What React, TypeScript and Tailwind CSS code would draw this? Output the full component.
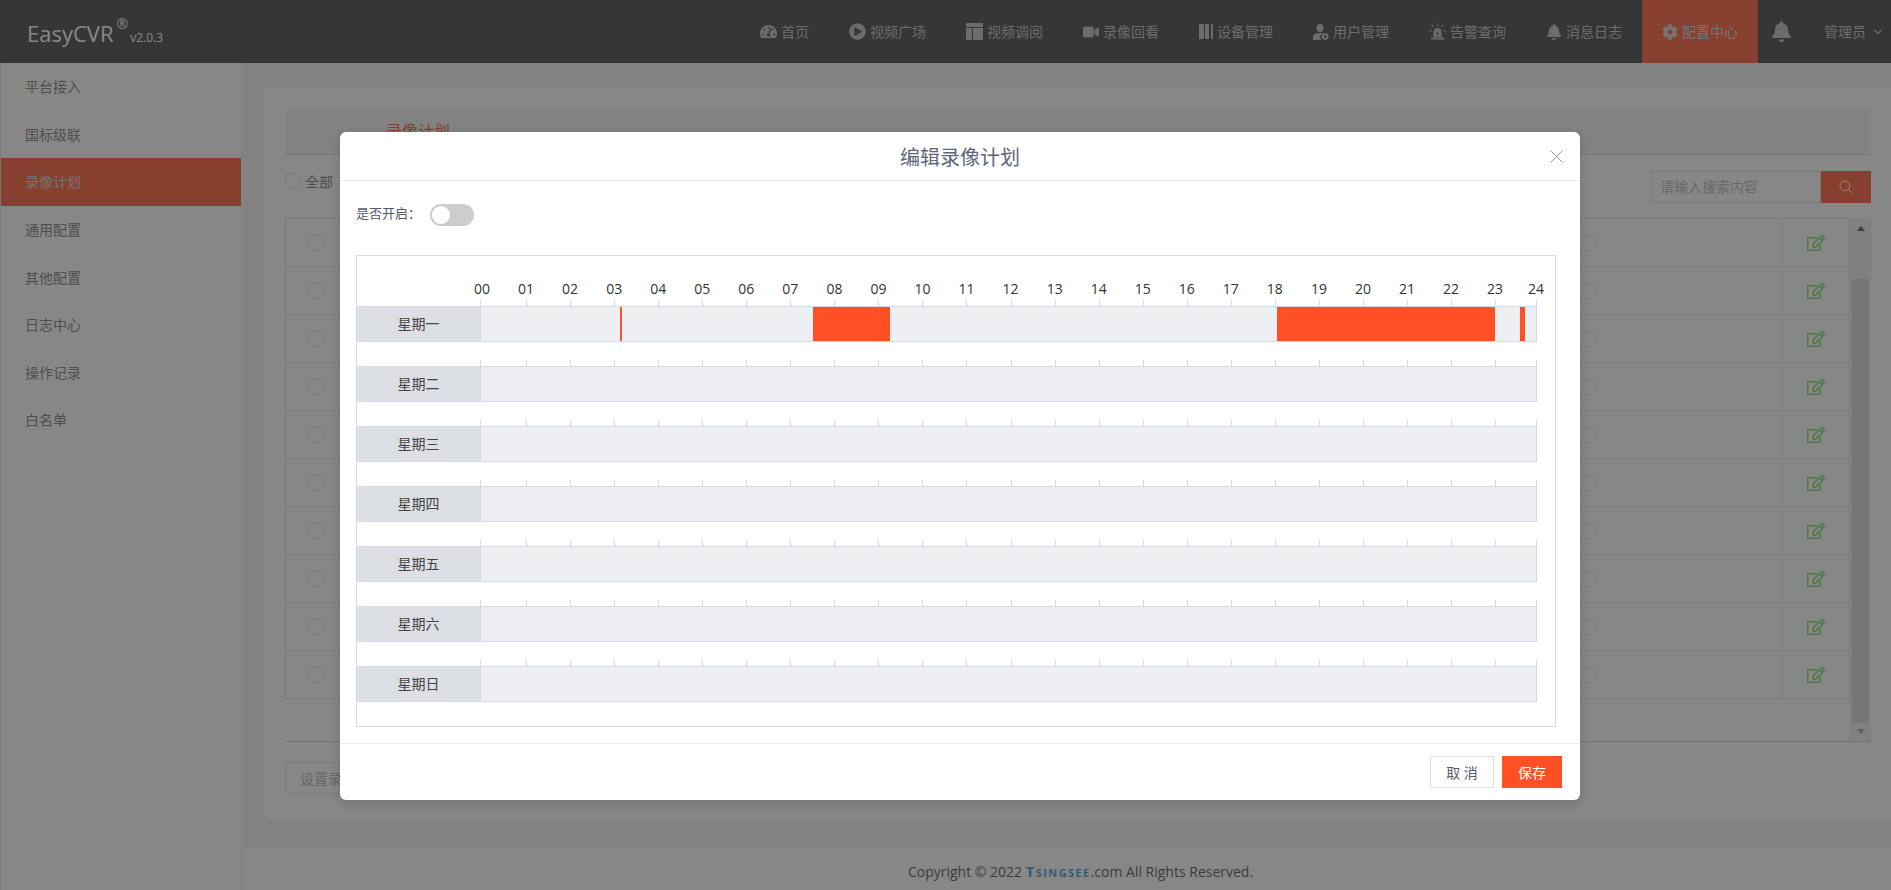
import { FC } from "react";
import { FaTachometerAlt, FaPlayCircle, FaVideo, FaBell, FaCog, FaRegEdit } from "react-icons/fa";
import { IoSearchOutline } from "react-icons/io5";

const LayoutIcon = () => (
  <svg width="17" height="17" viewBox="0 0 17 17" fill="currentColor">
    <rect x="0" y="0" width="17" height="4" />
    <rect x="0" y="5" width="6" height="12" />
    <rect x="7" y="5" width="10" height="12" />
  </svg>
);

const BooksIcon = () => (
  <svg width="14" height="15" viewBox="0 0 14 15" fill="currentColor">
    <rect x="0" y="0" width="5" height="15" rx="0.5" />
    <rect x="6" y="0" width="4" height="15" rx="0.5" />
    <rect x="12" y="0" width="2" height="15" />
  </svg>
);

const UserLockIcon = () => (
  <svg width="16" height="16" viewBox="0 0 16 16" fill="currentColor">
    <ellipse cx="7" cy="4" rx="3.6" ry="4" />
    <path d="M0 16v-2.5C0 10.6 2.5 9 5 9h4c.6 0 1.2.1 1.7.3A4 4 0 0 0 8.2 16z" />
    <path
      fillRule="evenodd"
      d="M12.2 9.2a3.4 3.4 0 1 0 0 6.8 3.4 3.4 0 0 0 0-6.8zm0 2.1a1.3 1.3 0 1 1 0 2.6 1.3 1.3 0 0 1 0-2.6z"
    />
  </svg>
);

const SirenIcon = () => (
  <svg width="17" height="17" viewBox="0 0 17 17" fill="currentColor">
    <path d="M4.5 14V9a4 4 0 0 1 8 0v5z" />
    <rect x="2" y="14.5" width="13" height="2" />
    <path d="M8 0h1v3H8zM2.2 2.2l.8-.7 2 2.2-.8.7zM14.8 2.2l-.8-.7-2 2.2.8.7zM0 7.5h2.6v1H0zM14.4 7.5H17v1h-2.6z" />
    <path d="M9 8L7 11.2h1.3L8 13.5l2-3.2H8.7z" fill="#343539" />
  </svg>
);

const navItems = [
  { label: "首页", icon: <FaTachometerAlt size={17} /> },
  { label: "视频广场", icon: <FaPlayCircle size={17} /> },
  { label: "视频调阅", icon: <LayoutIcon /> },
  { label: "录像回看", icon: <FaVideo size={16} /> },
  { label: "设备管理", icon: <BooksIcon /> },
  { label: "用户管理", icon: <UserLockIcon /> },
  { label: "告警查询", icon: <SirenIcon /> },
  { label: "消息日志", icon: <FaBell size={16} /> },
];

const sideItems = ["平台接入", "国标级联", "录像计划", "通用配置", "其他配置", "日志中心", "操作记录", "白名单"];
const days = ["星期一", "星期二", "星期三", "星期四", "星期五", "星期六", "星期日"];
const hours = Array.from({ length: 25 }, (_, i) => String(i).padStart(2, "0"));

// px offsets inside the monday track
const segments = [
  { left: 139, width: 2 },
  { left: 332, width: 77 },
  { left: 796, width: 218 },
  { left: 1039, width: 5 },
];

const Header: FC = () => (
  <header className="h-[63px] shrink-0 bg-[#343539] flex items-center text-[#bcbcbc]">
    <div className="pl-[27px] flex items-start text-white mt-[2px]">
      <span className="text-[22px] leading-[30px]">EasyCVR</span>
      <span className="text-[14px] leading-[14px] ml-[3px] -mt-[1px]">®</span>
      <span className="text-[12px] leading-[16px] mt-[12px] ml-[2px]">v2.0.3</span>
    </div>
    <nav className="ml-auto flex h-full text-[14px]">
      {navItems.map((item) => (
        <div key={item.label} className="flex items-center gap-1 px-5">
          {item.icon}
          <span>{item.label}</span>
        </div>
      ))}
      <div className="flex items-center gap-1 w-[116px] justify-center bg-[#ff4f24] text-[#d0d0d0]">
        <FaCog size={16} />
        <span>配置中心</span>
      </div>
    </nav>
    <div className="w-[66px] flex justify-center pr-[21px] pl-[2px]">
      <FaBell size={21} />
    </div>
    <div className="flex items-center text-[14px] w-[67px]">
      <span>管理员</span>
      <svg className="ml-2 shrink-0" width="8" height="6" viewBox="0 0 8 6" fill="none" stroke="currentColor" strokeWidth="1.2">
        <path d="M0.5 1L4 4.5L7.5 1" />
      </svg>
    </div>
  </header>
);

const Sidebar: FC = () => (
  <aside className="w-[241px] shrink-0 bg-white border-l border-[#dcdcdc] text-[14px] text-[#707070]">
    {sideItems.map((item) => (
      <div
        key={item}
        className={`h-[47.6px] flex items-center pl-6 ${item === "录像计划" ? "bg-[#ff4f24] text-[#d0d0d0]" : ""}`}
      >
        {item}
      </div>
    ))}
  </aside>
);

const Background: FC = () => (
  <main className="flex-1 bg-[#f2f2f2] flex flex-col min-w-0">
    <div className="flex-1 pl-6 pt-[25px] pb-[29px]">
      <div className="bg-white h-full px-5 pt-5">
        <div className="h-[47px] bg-[#f2f2f2] border-b border-[#d8d8d8] flex items-center pl-[101px] text-[16px] text-[#ff4f24]">
          录像计划
        </div>
        <div className="h-[63px] flex items-center text-[14px] text-[#707070]">
          <div className="flex items-center mb-[11px]">
            <span className="w-4 h-4 border border-[#dcdee2] rounded-sm mr-1" />
            全部
          </div>
          <div className="ml-auto flex">
            <div className="w-[170px] h-8 border border-[#dcdee2] flex items-center pl-2 text-[14px] text-[#b0b0b0]">
              请输入搜索内容
            </div>
            <div className="w-[50px] h-8 bg-[#ff4f24] flex items-center justify-center text-white">
              <IoSearchOutline size={16} />
            </div>
          </div>
        </div>
        <div className="h-[524px] flex border-b border-[#c8c8c8]">
          <div className="w-[1565px]">
            <div className="border border-[#d8d8d8] border-b-0">
              {Array.from({ length: 10 }).map((_, i) => (
                <div key={i} className="h-[48px] border-b border-[#e4e4e4] flex items-center">
                  <div className="w-[47px] pl-[22px]">
                    <span className="block w-4 h-4 border border-[#dcdee2] rounded-sm" />
                  </div>
                  <span className="ml-[1240px] w-[24px] h-4 border border-[#dcdee2] rounded-sm" />
                  <div className="ml-auto w-[67px] h-full border-l border-[#e8e8e8] flex items-center justify-center text-[#6ed84a]">
                    <FaRegEdit size={18} />
                  </div>
                </div>
              ))}
            </div>
          </div>
          <div className="flex-1 bg-[#f1f1f1] flex flex-col items-center pt-[8px] pb-[7px]">
            <div className="w-0 h-0 border-x-[4px] border-x-transparent border-b-[5px] border-b-[#505050]" />
            <div className="w-[17px] h-[444px] bg-[#d2d2d2] mt-[48px]" />
            <div className="w-0 h-0 border-x-[4px] border-x-transparent border-t-[5px] border-t-[#a0a0a0] mt-[6px]" />
          </div>
        </div>
        <div className="mt-[20px] w-[120px] h-8 border border-[#dcdee2] flex items-center pl-[14px] text-[14px] text-[#aaa]">
          设置录像计划
        </div>
      </div>
    </div>
    <footer className="h-[42px] shrink-0 bg-white border-l border-[#e8e8e8] flex items-center justify-center text-[14px] text-[#444] pl-[28px] pt-[5px]">
      <span>Copyright © 2022&nbsp;</span>
      <span className="font-bold text-[#2f8fd0] tracking-[1.4px] text-[11px]">
        <span className="text-[15px]">T</span>SINGSEE
      </span>
      <span>.com All Rights Reserved.</span>
    </footer>
  </main>
);

const ScheduleRow: FC<{ day: string; segs: { left: number; width: number }[] }> = ({ day, segs }) => (
  <div className="mb-[18px] w-[1180px]">
    <div className="h-[6px] flex pl-[123px]">
      {hours.map((h, i) => (
        <div
          key={h}
          className={`border-l border-[#d3dce6] ${i === 0 ? "w-[46px]" : i === 23 ? "w-[41px]" : i === 24 ? "w-[1px]" : "w-[44.05px]"}`}
        />
      ))}
    </div>
    <div className="h-[36px] flex border-y border-[#d3dce6]">
      <div className="w-[123px] bg-[#dcdfe3] flex items-center justify-center text-[14px] text-[#444] pb-[2px]">{day}</div>
      <div className="relative w-[1057px] bg-[#eeeff3] border-x border-[#d3dce6]">
        {segs.map((s) => (
          <div
            key={s.left}
            className="absolute top-0 bottom-0 bg-[#ff4f24]"
            style={{ left: s.left, width: s.width }}
          />
        ))}
      </div>
    </div>
  </div>
);

const Modal: FC = () => (
  <div className="absolute left-[340px] top-[132px] w-[1240px] h-[668px] bg-white rounded-md shadow-[0_4px_12px_rgba(0,0,0,0.15)] flex flex-col">
    <div className="h-[49px] shrink-0 border-b border-[#e8eaec] relative flex items-center justify-center text-[20px] text-[#5e6679] pt-1">
      编辑录像计划
      <svg
        className="absolute right-[17px] top-[18px]"
        width="13"
        height="13"
        viewBox="0 0 13 13"
        stroke="#999"
        strokeWidth="1"
      >
        <path d="M0.5 0.5L12.5 12.5M12.5 0.5L0.5 12.5" />
      </svg>
    </div>
    <div className="flex-1 px-4">
      <div className="flex items-center h-[22px] mt-[23px] mb-[29px]">
        <span className="w-[74px] text-[13px] text-[#515a6e] -mt-[2px]">是否开启：</span>
        <div className="w-[44px] h-[22px] rounded-full bg-[#ccc] p-[2px]">
          <div className="w-[18px] h-[18px] rounded-full bg-white" />
        </div>
      </div>
      <div className="w-[1200px] h-[472px] border border-[#d3dce6] pt-[23px]">
        <div className="flex pl-[103px] h-[21px] text-[14px] leading-[20px] text-[#333]">
          {hours.map((h, i) => (
            <div key={h} className={`text-center ${i === 24 ? "w-[38px]" : "w-[44.12px]"}`}>
              {h}
            </div>
          ))}
        </div>
        {days.map((d, i) => (
          <ScheduleRow key={d} day={d} segs={i === 0 ? segments : []} />
        ))}
      </div>
    </div>
    <div className="h-[57px] shrink-0 border-t border-[#e8eaec] flex items-center justify-end gap-2 pr-[18px]">
      <button className="w-[64px] h-8 border border-[#dcdee2] text-[14px] text-[#515a6e]">取 消</button>
      <button className="w-[60px] h-8 bg-[#ff4f24] text-[14px] text-white">保存</button>
    </div>
  </div>
);

const App: FC = () => (
  <div className="relative h-screen overflow-hidden flex flex-col font-['Open_Sans','Noto_Sans_CJK_SC',sans-serif]">
    <Header />
    <div className="flex flex-1 min-h-0">
      <Sidebar />
      <Background />
    </div>
    <div className="absolute inset-0 bg-[rgba(55,55,55,0.6)]" />
    <Modal />
  </div>
);

export default App;
